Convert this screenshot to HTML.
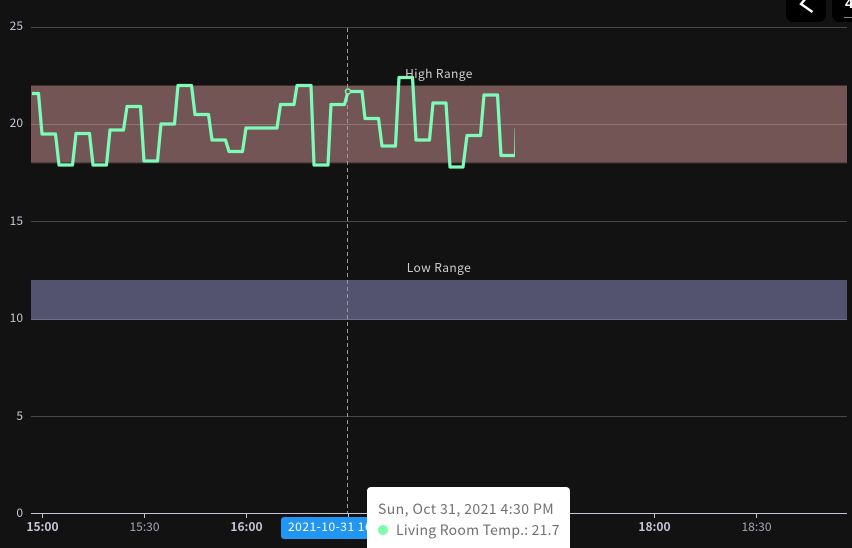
<!DOCTYPE html>
<html>
<head>
<meta charset="utf-8">
<style>
html,body{margin:0;padding:0;background:#121212;width:852px;height:548px;overflow:hidden;}
#w{width:852px;height:548px;position:relative;overflow:hidden;font-family:"Noto Sans CJK SC","Liberation Sans",sans-serif;}
svg{position:absolute;left:0;top:0;}
.tip{position:absolute;left:367px;top:487px;width:203px;height:61px;background:#fff;border-radius:4px 4px 0 0;color:#707070;font-size:14px;line-height:22px;box-sizing:border-box;}
.tip .a{position:absolute;left:11px;top:11px;white-space:nowrap;letter-spacing:.42px;}
.tip .b{position:absolute;left:29px;top:32px;white-space:nowrap;letter-spacing:.22px;}
.tip i{position:absolute;left:11px;top:38px;width:10px;height:10px;border-radius:50%;background:#7dfcb0;}
.pill{position:absolute;left:281px;top:517px;width:100px;height:22px;background:#2196f3;border-radius:3px;color:#fff;font-size:12px;line-height:20px;padding-left:7px;box-sizing:border-box;white-space:nowrap;overflow:hidden;letter-spacing:.5px;}
.btn{position:absolute;top:-20px;width:40px;height:42px;background:#000;border-radius:7px;}
</style>
</head>
<body>
<div id="w">
<svg width="852" height="548" viewBox="0 0 852 548" font-family="'Noto Sans CJK SC','Liberation Sans',sans-serif" font-size="12">
  <g stroke="#484848" stroke-width="1">
    <line x1="31" y1="27.5" x2="847" y2="27.5"/>
    <line x1="31" y1="221.5" x2="847" y2="221.5"/>
    <line x1="31" y1="416.5" x2="847" y2="416.5"/>
  </g>
  <rect x="31" y="85" width="816" height="78" fill="#735556"/>
  <rect x="31" y="85" width="816" height="1" fill="#3a2e2e"/>
  <rect x="31" y="162.5" width="816" height="1" fill="#3a2e2e"/>
  <line x1="31" y1="124.5" x2="847" y2="124.5" stroke="#8f7577"/>
  <rect x="31" y="280" width="816" height="40" fill="#53536f"/>
  <line x1="31" y1="319.5" x2="847" y2="319.5" stroke="#6e6e85"/>
  <line x1="31" y1="513.5" x2="847" y2="513.5" stroke="#c4c4d6"/>
  <g stroke="#c4c4d6">
    <line x1="42.5" y1="513" x2="42.5" y2="518"/>
    <line x1="144.5" y1="513" x2="144.5" y2="518"/>
    <line x1="246.5" y1="513" x2="246.5" y2="518"/>
    <line x1="348.5" y1="513" x2="348.5" y2="518"/>
    <line x1="654.5" y1="513" x2="654.5" y2="518"/>
    <line x1="756.5" y1="513" x2="756.5" y2="518"/>
  </g>
  <line x1="347.5" y1="28" x2="347.5" y2="513" stroke="#9a9aa5" stroke-dasharray="4 3"/>
  <polyline fill="none" stroke="#7dfcb8" stroke-width="3.2" stroke-linejoin="round" points="32,93.5 38.5,93.5 42,134 55.5,134 59,165 72.5,165 76,133.5 89.5,133.5 93,165 106.5,165 110,130 123.5,130 127,106.5 140.5,106.5 144,161 157.5,161 161,124 174.5,124 178,85.5 191.5,85.5 195,114.5 208.5,114.5 212,140 225.5,140 229,151.5 242.5,151.5 246,128 277,128 280.5,104.5 294,104.5 297,85.5 311,85.5 314,165 328,165 331,104.5 344.5,104.5 348,91.5 362,91.5 365,118.5 378.5,118.5 382,146 395.5,146 399,77.5 412.5,77.5 416,140 429.5,140 433,103 446,103 450,167 463,167 467,135.5 480.5,135.5 484,95 497.5,95 501,155.5 514.5,155.5"/>
  <polygon points="514,157 515,157 515,128 514.7,128" fill="#7dfcb8"/>
  <circle cx="348" cy="91.5" r="2.5" fill="#735556" stroke="#7dfcb8" stroke-width="1.5"/>
  <g fill="#c4c4d6" text-anchor="end">
    <text x="23" y="30">25</text>
    <text x="23" y="127">20</text>
    <text x="23" y="225">15</text>
    <text x="23" y="322">10</text>
    <text x="23" y="420">5</text>
    <text x="23" y="517">0</text>
  </g>
  <g fill="#c4c4d6" text-anchor="middle">
    <text x="42.5" y="531" font-weight="bold">15:00</text>
    <text x="144.5" y="531" fill="#a5a5b5">15:30</text>
    <text x="246.5" y="531" font-weight="bold">16:00</text>
    <text x="654.5" y="531" font-weight="bold">18:00</text>
    <text x="756.5" y="531" fill="#a5a5b5">18:30</text>
  </g>
  <g fill="#cfcfcf" font-size="12" text-anchor="middle" letter-spacing=".4">
    <text x="439" y="78">High Range</text>
    <text x="439" y="272">Low Range</text>
  </g>
</svg>
<div class="pill">2021-10-31 16:30</div>
<div class="tip">
  <div class="a">Sun, Oct 31, 2021 4:30 PM</div>
  <i></i>
  <div class="b">Living Room Temp.: 21.7</div>
</div>
<div class="btn" style="left:786px"></div>
<div class="btn" style="left:832px"></div>
<svg width="852" height="548" viewBox="0 0 852 548">
  <polyline points="806,-2 801,4 812.5,12" fill="none" stroke="#fff" stroke-width="2.4"/>
  <text x="845" y="8" fill="#fff" font-family="'Liberation Sans',sans-serif" font-size="15" font-weight="bold">4</text>
  <rect x="844" y="17" width="8" height="1" fill="#888"/>
</svg>
</div>
</body>
</html>
